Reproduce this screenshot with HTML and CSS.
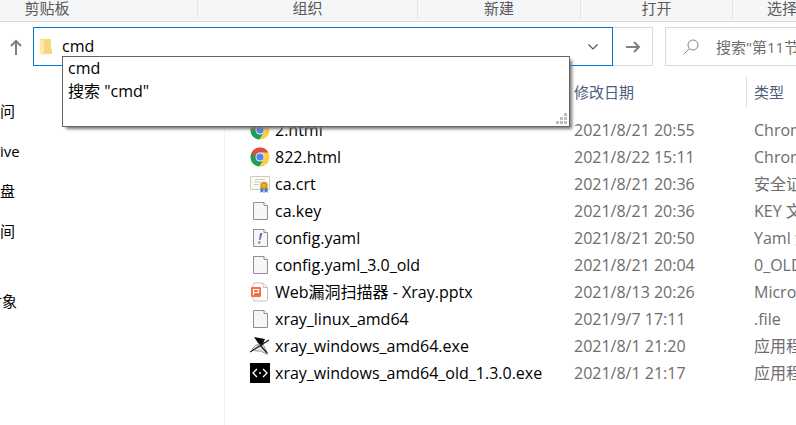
FILE: index.html
```html
<!DOCTYPE html>
<html lang="zh-CN">
<head>
<meta charset="utf-8">
<title>文件资源管理器</title>
<link rel="stylesheet" href="styles.css">
</head>
<body>
<svg class="defs" aria-hidden="true">
  <symbol id="chrome" viewBox="0 0 20 20">
    <circle cx="10" cy="10" r="9.5" fill="#ffcd40"/>
    <path d="M10 10 1.8 5.2A9.5 9.5 0 0 0 9.3 19.5L14 12Z" fill="#1a9f5a"/>
    <path d="M1.8 5.2A9.5 9.5 0 0 1 18.4 5.6H10L6 11.5Z" fill="#db4f40"/>
    <circle cx="10" cy="10" r="4.5" fill="#f1f1f1"/>
    <circle cx="10" cy="10" r="3.6" fill="#4b87f5"/>
  </symbol>
  <symbol id="page" viewBox="0 0 20 20">
    <path d="M3.500 1.500H14L17.500 5V18.500H3.500Z" fill="#f5f6f6" stroke="#8f8f8f"/>
    <path d="M14 1.500V4.500H17.500" fill="#fff" stroke="#8f8f8f"/>
  </symbol>
</svg>
<header class="ribbon">
  <div class="group group-clip">剪贴板</div>
  <div class="group">组织</div>
  <div class="group">新建</div>
  <div class="group">打开</div>
  <div class="group group-select">选择</div>
</header>
<nav class="navbar">
  <button class="up" aria-label="上移">
    <svg width="14" height="18" viewBox="0 0 14 18"><path d="M7 17V3M2 8 7 3 12 8" fill="none" stroke="#7f7f7f" stroke-width="2"/></svg>
  </button>
  <div class="address">
    <svg width="14" height="18" viewBox="0 0 14 18"><path d="M1 1H12V11H13V16H3Z" fill="#f6d77b"/><path d="M1 1 5 3V18L1 16Z" fill="#ffe9a9"/></svg>
    <input class="path" type="text" value="cmd" aria-label="地址">
    <button class="toggle" aria-label="以前的位置">
      <svg width="12" height="8" viewBox="0 0 12 8"><path d="M1.500 1.500 6 6 10.500 1.500" fill="none" stroke="#555" stroke-width="1.200"/></svg>
    </button>
    <div class="suggest">
      <ul><li>cmd</li><li>搜索 "cmd"</li></ul>
      <svg class="grip" width="11" height="11" viewBox="0 0 11 11"><path d="M8 0h3v3H8zM4 4h3v3H4zM8 4h3v3H8zM0 8h3v3H0zM4 8h3v3H4zM8 8h3v3H8z" fill="#bdbdbd"/></svg>
    </div>
  </div>
  <button class="go" aria-label="转到">
    <svg width="16" height="14" viewBox="0 0 16 14"><path d="M1 7H14M9 2 14 7 9 12" fill="none" stroke="#7f7f7f" stroke-width="2"/></svg>
  </button>
  <div class="search">
    <svg width="16" height="16" viewBox="0 0 16 16"><circle cx="10" cy="6" r="5" fill="none" stroke="#858585"/><path d="M6.500 9.500 .5 15.500" stroke="#858585"/></svg>
    <input type="search" placeholder="搜索&quot;第11节" aria-label="搜索">
  </div>
</nav>
<div class="body">
  <aside class="tree">
    <ul><li>问</li><li>ive</li><li>盘</li><li>间</li></ul>
    <ul class="nested"><li>对象</li></ul>
  </aside>
  <main class="files">
    <table>
      <colgroup><col class="col-name"><col class="col-date"><col></colgroup>
      <thead><tr><th aria-label="名称"></th><th><span>修改日期</span></th><th><span>类型</span></th></tr></thead>
      <tbody>
        <tr><td><div class="name"><svg><use href="#chrome"/></svg>2.html</div></td><td>2021/8/21 20:55</td><td>Chrome</td></tr>
        <tr><td><div class="name"><svg><use href="#chrome"/></svg>822.html</div></td><td>2021/8/22 15:11</td><td>Chrome</td></tr>
        <tr><td><div class="name"><svg viewBox="0 0 20 20"><path d="M.5 2.500H19.500V15.500H.5Z" fill="#fbf9f5" stroke="#d3cabb"/><path d="M5 5.500H15M4 8H11M4 10.500H9" stroke="#c9cdd0"/><path d="M10.500 13V19L12.500 17.500 13.500 19V14ZM14.500 13V19L16 17.500 17.500 19V13Z" fill="#3a74d8"/><circle cx="14" cy="11.500" r="3.700" fill="#d3961a"/><circle cx="14" cy="11.500" r="1.700" fill="#efb92f"/></svg>ca.crt</div></td><td>2021/8/21 20:36</td><td>安全证书</td></tr>
        <tr><td><div class="name"><svg><use href="#page"/></svg>ca.key</div></td><td>2021/8/21 20:36</td><td>KEY 文件</td></tr>
        <tr><td><div class="name"><svg viewBox="0 0 20 20"><use href="#page"/><path d="M10 5H12.500L10.500 12H9ZM8.500 13.500H10.500L10 15.500H8Z" fill="#8a5fb5"/></svg>config.yaml</div></td><td>2021/8/21 20:50</td><td>Yaml 源</td></tr>
        <tr><td><div class="name"><svg><use href="#page"/></svg>config.yaml_3.0_old</div></td><td>2021/8/21 20:04</td><td>0_OLD</td></tr>
        <tr><td><div class="name"><svg viewBox="0 0 20 20"><path d="M4 1H13L17.500 5.500V17Q17.500 19 15.500 19H5Q3 19 3 17V2Z" fill="#fff" stroke="#c2c2c2"/><path d="M13 1V5.500H17.500" fill="none" stroke="#c2c2c2"/><rect x="1" y="5" width="10" height="10" rx="1" fill="#f4713f"/><path d="M3.500 13V7.500H8.500V10.500H3.500" fill="none" stroke="#fff" stroke-width="1.200"/></svg>Web漏洞扫描器 - Xray.pptx</div></td><td>2021/8/13 20:26</td><td>Microsoft</td></tr>
        <tr><td><div class="name"><svg><use href="#page"/></svg>xray_linux_amd64</div></td><td>2021/9/7 17:11</td><td>.file</td></tr>
        <tr><td><div class="name"><svg viewBox="0 0 20 20"><path d="M6 9 2 13 6 15H11L16 18H18L13 8Z" fill="#e6e6e6" stroke="#9a9a9a"/><path d="M4 1 15 3 12 10 8 7Z" fill="#0c0c0c"/><path d="M0 16 19 4M10 9 17 17" stroke="#222" stroke-width="1.400"/></svg>xray_windows_amd64.exe</div></td><td>2021/8/1 21:20</td><td>应用程序</td></tr>
        <tr><td><div class="name"><svg viewBox="0 0 20 20"><path d="M0 0H20V20H0Z" fill="#000"/><path d="M7 6 3 10 7 14M13 6 17 10 13 14" fill="none" stroke="#fff" stroke-width="1.300"/><circle cx="10" cy="10" r="1" fill="#fff"/></svg>xray_windows_amd64_old_1.3.0.exe</div></td><td>2021/8/1 21:17</td><td>应用程序</td></tr>
      </tbody>
    </table>
  </main>
</div>
</body>
</html>
```
FILE: styles.css
```css
* { box-sizing: border-box; }
body {
  margin: 0;
  min-height: 100vh;
  display: flex;
  flex-direction: column;
  overflow: hidden;
  background: #fff;
  color: #000;
  font: 15px/20px "Open Sans", "Noto Sans CJK SC", sans-serif;
}
button, input { font: inherit; color: inherit; border: 0; padding: 0; background: none; outline: 0; }
button { display: flex; align-items: center; justify-content: center; }
ul { list-style: none; margin: 0; padding: 0; }
svg { flex: none; }
.defs { display: none; }

.ribbon {
  display: grid;
  grid-template-columns: 198px 220px 163px 152px 1fr;
  padding-bottom: 3px;
  background: #f5f6f7;
  border-bottom: 1px solid #dadbdc;
  color: #5a5a5a;
}
.group { height: 18px; line-height: 16px; text-align: center; border-right: 1px solid #e2e3e4; white-space: nowrap; }
.group-clip { padding-right: 103px; }
.group-select { padding-left: 34px; text-align: left; border: 0; overflow: hidden; }

.navbar { display: flex; height: 44px; padding-top: 5px; }
.up { width: 33px; padding-right: 2px; }
.address {
  position: relative;
  flex: 1;
  display: flex;
  align-items: center;
  padding-left: 5px;
  border: 1px solid #0078d7;
  font-size: 16px;
}
.path { flex: 1; min-width: 0; height: 34px; margin: 0 0 2px 9px; }
.toggle { width: 38px; height: 36px; }
.suggest {
  position: absolute;
  z-index: 1;
  top: 28px;
  left: 28px;
  right: 42px;
  height: 71px;
  padding: 0 5px;
  background: #fff;
  border: 1px solid #646464;
  box-shadow: 3px 3px 3px -1px #777;
}
.suggest li { height: 23px; line-height: 23px; }
.grip { position: absolute; right: 2px; bottom: 2px; }
.go { width: 40px; border: 1px solid #d9d9d9; border-left: 0; }
.search {
  display: flex;
  align-items: center;
  width: 131px;
  margin-left: 12px;
  padding-left: 17px;
  gap: 17px;
  border: 1px solid #d9d9d9;
  border-right: 0;
}
.search input { flex: 1; min-width: 0; appearance: none; }
.search input::-webkit-search-cancel-button { display: none; }
.search input::placeholder { color: #6d6d6d; opacity: 1; }

.body { flex: 1; display: flex; }
.tree { flex: none; width: 225px; padding-top: 25px; border-right: 1px solid #f3f3f3; overflow: hidden; }
.tree li { height: 40px; line-height: 40px; }
.tree .nested { margin: 30px 0 0 -13px; }
.files { flex: 1; min-width: 0; padding-top: 10px; overflow: hidden; }
table { width: 100%; table-layout: fixed; border-collapse: collapse; }
.col-name { width: 341px; }
.col-date { width: 180px; }
th, td { padding: 0; text-align: left; font-weight: 400; white-space: nowrap; overflow: hidden; }
th { height: 40px; padding-bottom: 8px; color: #4c607a; }
th span { display: block; height: 32px; line-height: 32px; padding-left: 7px; border-left: 1px solid #e0e0e0; }
td { height: 27px; padding-left: 8px; color: #6d6d6d; font-size: 16px; }
td:first-child { padding-left: 25px; color: #000; }
.name { display: flex; align-items: center; gap: 5px; }
.name svg { width: 20px; height: 20px; }
```
